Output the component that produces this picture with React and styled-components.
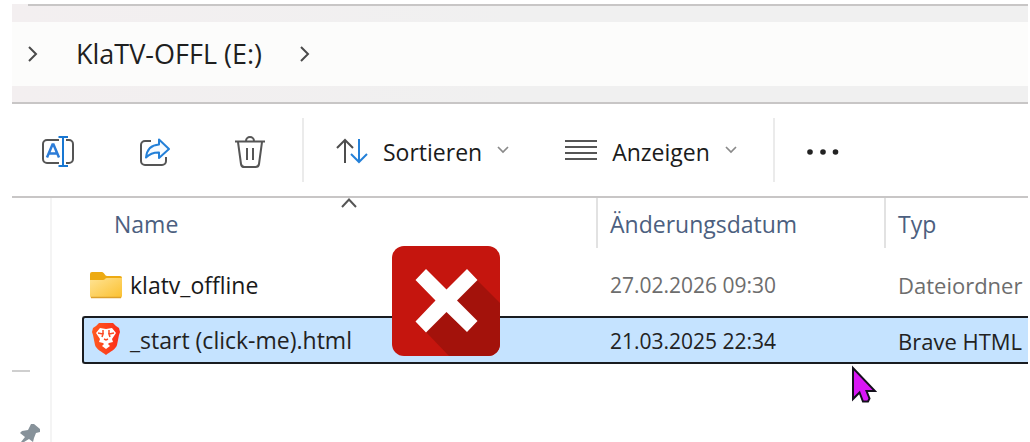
import React from "react";
import styled, { createGlobalStyle, css } from "styled-components";

const GlobalStyle = createGlobalStyle`
  *, *::before, *::after { box-sizing: border-box; }
  body {
    margin: 0;
    background: #fff;
    color: #1b1b1b;
    font-family: "Open Sans", "Noto Sans", sans-serif;
  }
  button {
    border: 0;
    padding: 0;
    background: none;
    color: inherit;
    font: inherit;
  }
  svg { display: block; flex: none; }
`;

const Page = styled.div`
  height: 100vh;
  padding: 4px 2px 0 12px;
  overflow: hidden;
`;

const Explorer = styled.div`
  position: relative;
  display: flex;
  flex-direction: column;
  height: 100%;
  overflow: hidden;
`;

const AddressArea = styled.header`
  padding-bottom: 16px;
  background: linear-gradient(90deg, #f3eff0, #f0f0f0 50%);
  border-bottom: 2px solid #c8c6c6;
`;

const TopEdge = styled.div`
  height: 18px;
  &::before {
    content: "";
    display: block;
    height: 2px;
    margin-left: 16px;
    background: #c8c6c6;
  }
`;

const Breadcrumb = styled.nav`
  display: flex;
  align-items: center;
  gap: 36px;
  height: 64px;
  padding-left: 14px;
  background: #fcfcfb;
`;

const Crumb = styled.a`
  color: #1f1f1f;
  font-size: 27px;
  line-height: 32px;
  text-decoration: none;
  white-space: nowrap;
`;

const Toolbar = styled.div`
  display: flex;
  align-items: center;
  height: 94px;
  border-bottom: 2px solid #c8c6c6;
`;

const ToolGroup = styled.div`
  display: flex;
  align-items: center;
  gap: ${(p) => p.$gap}px;
  height: 64px;
  padding: 4px ${(p) => p.$right}px 0 ${(p) => p.$left}px;
  border-right: ${(p) => (p.$last ? "0" : "2px solid #ebebeb")};
`;

const ToolButton = styled.button`
  display: flex;
  align-items: center;
  gap: 15px;
  height: 40px;
  font-size: 23px;
  line-height: 32px;
  white-space: nowrap;
`;

const Main = styled.div`
  display: flex;
  flex: 1;
  min-height: 0;
`;

const Sidebar = styled.aside`
  flex: none;
  width: 40px;
  padding-top: 172px;
  border-right: 2px solid #f4f4f4;
`;

const SidebarRule = styled.hr`
  width: 18px;
  height: 2px;
  margin: 0 0 52px;
  border: 0;
  background: #cfcfcf;
`;

const PinButton = styled.button`
  display: block;
  margin-left: 8px;
`;

const Listing = styled.main`
  flex: 1;
  min-width: 0;
  padding-left: 30px;
  overflow: hidden;
`;

const FileTable = styled.table`
  width: 100%;
  table-layout: fixed;
  border-spacing: 0;
  font-size: 23px;
  line-height: 32px;
`;

const NameCol = styled.col`width: 514px;`;
const DateCol = styled.col`width: 288px;`;

const HeadCell = styled.th`
  height: 50px;
  padding: 2px 0 0 ${(p) => (p.$first ? 20 : 12)}px;
  border-left: ${(p) => (p.$first ? "0" : "2px solid #e2e2e2")};
  color: #4c5f80;
  font-weight: 400;
  text-align: left;
`;

const SortHeader = styled.button`
  position: relative;
  display: block;
  width: 100%;
  height: 48px;
  padding-left: 12px;
  text-align: left;
`;

const SortMark = styled.span`
  position: absolute;
  top: -3px;
  left: 50%;
  transform: translateX(-50%);
`;

const Cell = styled.td`
  padding: 0 0 0 14px;
  color: #6d6d6d;
  font-size: 22px;
  white-space: nowrap;
`;

const DateCell = styled(Cell)`
  font-size: 21px;
`;

const NameCell = styled(Cell)`
  padding-left: 8px;
  color: #191919;
  font-size: 23px;
`;

const FileRow = styled.tr`
  ${Cell} {
    height: 68px;
    padding-top: 5px;
  }
  ${(p) =>
    p.$selected &&
    css`
      ${Cell} {
        height: 48px;
        padding-top: 2px;
        border: solid #191c20;
        border-width: 2px 0;
        background: #c5e3ff;
        color: #222;
      }
      ${NameCell} {
        padding-top: 0;
        padding-left: 6px;
        border-left-width: 2px;
        border-radius: 3px 0 0 3px;
      }
    `}
`;

const FileName = styled.span`
  display: flex;
  align-items: center;
  gap: 8px;
`;

const ErrorBadge = styled.div`
  position: absolute;
  top: 242px;
  left: 380px;
`;

const Pointer = styled.div`
  position: absolute;
  top: 361px;
  left: 839px;
`;

const ChevronRight = () => (
  <svg width="14" height="20" viewBox="0 0 14 20" fill="none" stroke="#4a4a4a" strokeWidth="2">
    <path d="M3 3l7 7-7 7" />
  </svg>
);

const ChevronDown = () => (
  <svg width="12" height="12" viewBox="0 0 12 12" fill="none" stroke="#8a8a8a" strokeWidth="1.7">
    <path d="M1 1l5 5 5-5" />
  </svg>
);

const ChevronUp = () => (
  <svg width="18" height="12" viewBox="0 0 18 12" fill="none" stroke="#555" strokeWidth="2">
    <path d="M2 10l7-7.5 7 7.5" />
  </svg>
);

const RenameIcon = () => (
  <svg width="34" height="34" viewBox="0 0 34 34" fill="none" strokeWidth="2">
    <path d="M18 5H6a4 4 0 0 0-4 4v15a4 4 0 0 0 4 4h12" stroke="#555" />
    <path d="M25 5h3a4 4 0 0 1 4 4v15a4 4 0 0 1-4 4h-3" stroke="#555" />
    <path d="M6 22.500L11.500 9.500h1L18 22.500M8 18.500h8.500" stroke="#2b7cd8" strokeWidth="2.500" />
    <path d="M22 2v29M17.500 2h9.500M17.500 31h9.500" stroke="#1877d2" />
  </svg>
);

const ShareIcon = () => (
  <svg width="32" height="30" viewBox="0 0 32 30" fill="none" strokeWidth="2" strokeLinejoin="round">
    <path d="M12 4H6a4 4 0 0 0-4 4v16a4 4 0 0 0 4 4h17a4 4 0 0 0 4-4v-4" stroke="#555" />
    <path d="M20 2.500l10 9.500-10 9v-5.500c-6-.2-9.500 1.500-13 5 .8-7.500 5-12.500 13-13z" stroke="#2480d8" fill="#f7fbff" />
  </svg>
);

const TrashIcon = () => (
  <svg width="30" height="34" viewBox="0 0 30 34" fill="none" stroke="#555" strokeWidth="2">
    <path d="M0 6.500h30M11 6a4 4 0 0 1 8 0M3 7l3 22a3.500 3.500 0 0 0 3.500 3h11a3.500 3.500 0 0 0 3.500-3l3-22M12 13v12M18 13v12" />
  </svg>
);

const SortIcon = () => (
  <svg width="32" height="28" viewBox="0 0 32 28" fill="none" strokeWidth="2">
    <path d="M9 25V2M1 10l8-8 8 8" stroke="#4d4d4d" />
    <path d="M23 1v23M15 16l8 8 8-8" stroke="#2480d8" />
  </svg>
);

const ListIcon = () => (
  <svg width="32" height="26" viewBox="0 0 32 26" stroke="#555" strokeWidth="2">
    <path d="M0 2h32M0 8h32M0 14h32M0 20h32" />
  </svg>
);

const MoreIcon = () => (
  <svg width="34" height="8" viewBox="0 0 34 8" fill="#222">
    <circle cx="4" cy="4" r="2.800" />
    <circle cx="17" cy="4" r="2.800" />
    <circle cx="29.500" cy="4" r="2.800" />
  </svg>
);

const PinIcon = () => (
  <svg width="20" height="18" viewBox="0 0 20 18" fill="#87929a">
    <path d="M11 0h3l6 5v3l-4 1-2 5-1 4-4-3-5 3H1l4-5-5-4 2-2 6-1z" />
  </svg>
);

const FolderIcon = () => (
  <svg width="32" height="28" viewBox="0 0 32 28">
    <defs>
      <linearGradient id="folder" x1="0" y1="0" x2="1" y2="1">
        <stop offset="0" stopColor="#ffe394" />
        <stop offset="1" stopColor="#fbc02e" />
      </linearGradient>
    </defs>
    <path d="M0 3a2 2 0 0 1 2-2h10c2 0 3 4 5 4h13a2 2 0 0 1 2 2v16H0z" fill="#edaa12" />
    <path d="M0 9h13c2 0 2-2 4-2h15v18a2 2 0 0 1-2 2H2a2 2 0 0 1-2-2z" fill="url(#folder)" />
    <path d="M1 26.500h30" stroke="#dda02c" strokeWidth="1.500" />
  </svg>
);

const BraveIcon = () => (
  <svg width="32" height="36" viewBox="0 0 32 36">
    <defs>
      <linearGradient id="brave" x1="0" y1="0" x2="1" y2="0">
        <stop offset="0" stopColor="#ff5a1f" />
        <stop offset="1" stopColor="#fb2d1a" />
      </linearGradient>
    </defs>
    <path d="M9 1h14l3 3 3 2 1 4-1 3-2 10c-1 4-7 7-11 10-4-3-10-6-11-10L3 13l-1-3 1-4 3-2z" fill="url(#brave)" />
    <path d="M10 6l6 1 6-1 4 5-4 6 1 3-4 1-1 1 2 2-4 3-4-3 2-2-1-1-4-1 1-3-4-6z" fill="#fff" />
    <path d="M8 11l5 1-1 3M24 11l-5 1 1 3M13 8v4M19 8v4M14 17l2 1 2-1" fill="none" stroke="#fb4a24" strokeWidth="1.500" />
  </svg>
);

const CrossIcon = () => (
  <svg width="108" height="110" viewBox="0 0 108 110" role="img" aria-label="Fehler">
    <defs>
      <clipPath id="tile"><rect width="108" height="110" rx="12" /></clipPath>
    </defs>
    <g clipPath="url(#tile)">
      <path d="M0 0h108v110H0z" fill="#c5150e" />
      <path d="M85 34l23 23v53H57L34 86l20-32z" fill="#a3120b" />
      <path d="M34 23l20.500 20.500L75 23l10.500 11L65 54.500 85.500 75 75 86 54.500 66 34 86.500 23.500 75.500 43.500 54.500 23.500 34z" fill="#fff" />
    </g>
  </svg>
);

const PointerIcon = () => (
  <svg width="26" height="40" viewBox="0 0 26 40">
    <path d="M2 3v31l6.500-6.500 3.500 9h5l1.500-3-3-7.500H24z" fill="#d916f5" stroke="#14101c" strokeWidth="2" />
  </svg>
);

const files = [
  { name: "klatv_offline", date: "27.02.2026 09:30", type: "Dateiordner", Icon: FolderIcon },
  { name: "_start (click-me).html", date: "21.03.2025 22:34", type: "Brave HTML", Icon: BraveIcon, selected: true },
];

export default function App() {
  return (
    <Page>
      <GlobalStyle />
      <Explorer>
        <AddressArea>
          <TopEdge />
          <Breadcrumb>
            <ChevronRight />
            <Crumb href="#">KlaTV-OFFL (E:)</Crumb>
            <ChevronRight />
          </Breadcrumb>
        </AddressArea>
        <Toolbar>
          <ToolGroup $gap={64} $left={29} $right={37}>
            <ToolButton aria-label="Umbenennen"><RenameIcon /></ToolButton>
            <ToolButton aria-label="Freigeben"><ShareIcon /></ToolButton>
            <ToolButton aria-label="Löschen"><TrashIcon /></ToolButton>
          </ToolGroup>
          <ToolGroup $gap={56} $left={32} $right={36}>
            <ToolButton><SortIcon />Sortieren<ChevronDown /></ToolButton>
            <ToolButton><ListIcon />Anzeigen<ChevronDown /></ToolButton>
          </ToolGroup>
          <ToolGroup $gap={0} $left={31} $right={0} $last>
            <ToolButton aria-label="Mehr anzeigen"><MoreIcon /></ToolButton>
          </ToolGroup>
        </Toolbar>
        <Main>
          <Sidebar>
            <SidebarRule />
            <PinButton aria-label="Angeheftet"><PinIcon /></PinButton>
          </Sidebar>
          <Listing>
            <FileTable>
              <colgroup>
                <NameCol />
                <DateCol />
                <col />
              </colgroup>
              <thead>
                <tr>
                  <HeadCell $first aria-sort="ascending">
                    <SortHeader>
                      Name
                      <SortMark><ChevronUp /></SortMark>
                    </SortHeader>
                  </HeadCell>
                  <HeadCell>Änderungsdatum</HeadCell>
                  <HeadCell>Typ</HeadCell>
                </tr>
              </thead>
              <tbody>
                {files.map(({ name, date, type, Icon, selected }) => (
                  <FileRow key={name} $selected={selected}>
                    <NameCell>
                      <FileName><Icon />{name}</FileName>
                    </NameCell>
                    <DateCell>{date}</DateCell>
                    <Cell>{type}</Cell>
                  </FileRow>
                ))}
              </tbody>
            </FileTable>
          </Listing>
        </Main>
        <ErrorBadge><CrossIcon /></ErrorBadge>
        <Pointer><PointerIcon /></Pointer>
      </Explorer>
    </Page>
  );
}
